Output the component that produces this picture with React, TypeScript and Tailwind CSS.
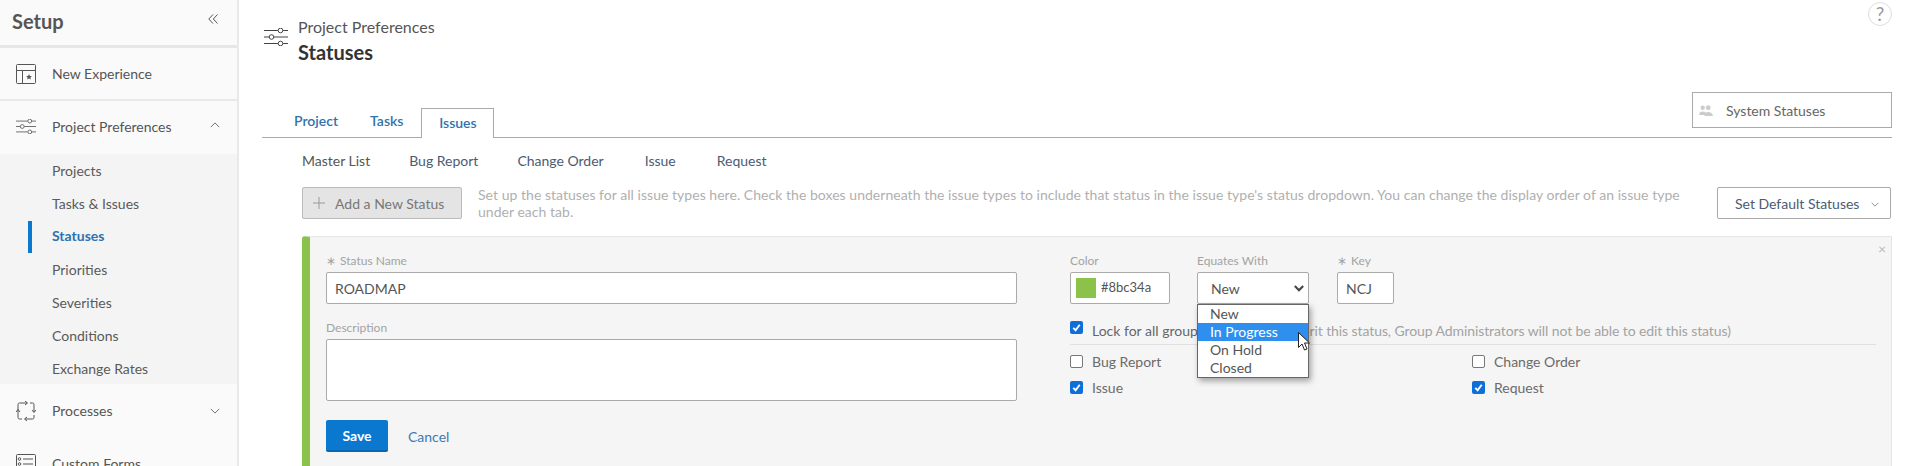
import type { ReactNode } from "react";

function SlidersIcon({ className }: { className: string }) {
  return (
    <svg viewBox="0 0 24 18" fill="none" stroke="currentColor" strokeWidth="1" className={className}>
      <path d="M0 2.5h14M19 2.5h5M0 9h5M10 9h14M0 15.5h14M19 15.5h5" />
      <circle cx="16.5" cy="2.5" r="2.3" />
      <circle cx="7.5" cy="9" r="2.3" />
      <circle cx="16.5" cy="15.5" r="2.3" />
    </svg>
  );
}

function Chevron({ up, className }: { up?: boolean; className: string }) {
  return (
    <svg viewBox="0 0 12 7" fill="none" stroke="currentColor" strokeWidth="1" className={className}>
      <path d={up ? "M1 6l5-5 5 5" : "M1 1l5 5 5-5"} />
    </svg>
  );
}

function NavRow({ icon, label, chevron, border, up }: { icon: ReactNode; label: string; chevron?: ReactNode; border?: boolean; up?: boolean }) {
  return (
    <div className={`h-[53px] flex items-center pl-4 pr-[16px] ${border ? "border-b-2 border-[#e8e8e8]" : ""} ${up ? "pb-[2px]" : ""}`}>
      <div className="w-[20px] h-[20px] flex items-center justify-center text-[#555]">{icon}</div>
      <span className="ml-[16px] text-[#555] flex-1">{label}</span>
      {chevron}
    </div>
  );
}

function SubItem({ label, active }: { label: string; active?: boolean }) {
  return (
    <div className={`relative h-[33px] flex items-center pl-[52px] ${active ? "pb-[3px]" : ""}`}>
      {active && <div className="absolute left-[28px] top-px w-1 h-[32px] bg-[#0b78cf]" />}
      <span className={active ? "font-bold text-[#2f72ad]" : "text-[#5a5a5a]"}>{label}</span>
    </div>
  );
}

function Check({ checked, label }: { checked?: boolean; label: string }) {
  return (
    <div className="flex items-center h-[25px]">
      <Box checked={checked} />
      <span className="ml-[9px] text-[#6b6b6b]">{label}</span>
    </div>
  );
}

function Box({ checked }: { checked?: boolean }) {
  return checked ? (
    <div className="w-[13px] h-[13px] rounded-[2px] bg-[#0f6fd8] flex items-center justify-center">
      <svg viewBox="0 0 12 12" className="w-[11px] h-[11px]" fill="none" stroke="#fff" strokeWidth="2">
        <path d="M2.5 6.5l2.5 2.5 4.5-6" />
      </svg>
    </div>
  ) : (
    <div className="w-[13px] h-[13px] rounded-[2px] border border-[#777] bg-white" />
  );
}

function Label({ children }: { children: ReactNode }) {
  return <div className="h-[18px] text-xs leading-[14px] text-[#a3a3a3]">{children}</div>;
}

export default function App() {
  return (
    <div className="h-[466px] w-[1907px] overflow-hidden flex bg-white text-[14px] font-['Lato','Noto_Sans',sans-serif]">
      <aside className="w-[239px] shrink-0 bg-[#fafafa] border-r-2 border-[#e9e9e9]">
        <div className="h-[48px] border-b-[3px] border-[#e6e6e6] flex items-center justify-between pl-3 pr-[19px] pb-[3px]">
          <span className="text-[20px] font-bold text-[#555]">Setup</span>
          <svg viewBox="0 0 10 10" fill="none" stroke="#555" strokeWidth="1" className="w-[10px] h-[10px] mb-[4px]">
            <path d="M5 0.500L0.800 5 5 9.500M9.500 0.500L5.300 5l4.200 4.500" />
          </svg>
        </div>
        <NavRow
          border
          label="New Experience"
          icon={
            <svg viewBox="0 0 20 20" fill="none" stroke="currentColor" strokeWidth="1" className="w-[20px] h-[20px]">
              <rect x="0.5" y="0.5" width="19" height="19" rx="1" />
              <path d="M0.5 6.5h19M6.5 6.5v13" />
              <path d="M13 10l.9 1.9 2 .2-1.5 1.4.4 2-1.8-1-1.8 1 .4-2-1.5-1.4 2-.2z" fill="currentColor" stroke="none" />
            </svg>
          }
        />
        <NavRow
          up
          label="Project Preferences"
          icon={<SlidersIcon className="w-[20px] h-[15px]" />}
          chevron={<Chevron up className="w-[10px] h-[6px] text-[#555] mb-[3px] mr-[1px]" />}
        />
        <div className="h-[230px] bg-[#f4f4f4]">
          <SubItem label="Projects" />
          <SubItem label="Tasks & Issues" />
          <SubItem label="Statuses" active />
          <SubItem label="Priorities" />
          <SubItem label="Severities" />
          <SubItem label="Conditions" />
          <SubItem label="Exchange Rates" />
        </div>
        <NavRow
          label="Processes"
          icon={
            <svg viewBox="0 0 20 20" fill="none" stroke="currentColor" strokeWidth="1" className="w-[20px] h-[20px]">
              <path d="M2 9V3.500a1.500 1.500 0 0 1 1.500-1.500H11M9 0l2.500 2L9 4" />
              <path d="M14 2h2.500A1.500 1.500 0 0 1 18 3.500V11M16 9l2 2.500L20 9" />
              <path d="M18 14v2.500a1.500 1.500 0 0 1-1.500 1.500H9M11 16l-2.500 2L11 20" />
              <path d="M6 18H3.500A1.500 1.500 0 0 1 2 16.500V9M0 11l2-2.500L4 11" />
            </svg>
          }
          chevron={<Chevron className="w-[10px] h-[6px] text-[#555] mr-[1px]" />}
        />
        <NavRow
          label="Custom Forms"
          icon={
            <svg viewBox="0 0 20 20" fill="none" stroke="currentColor" strokeWidth="1" className="w-[20px] h-[20px]">
              <rect x="0.5" y="0.5" width="19" height="19" rx="1" />
              <path d="M7 5h10M7 10h10M7 15h10" />
              <circle cx="3.500" cy="5" r="1.300" />
              <circle cx="3.500" cy="10" r="1.300" />
              <circle cx="3.500" cy="15" r="1.300" />
            </svg>
          }
        />
      </aside>

      <main className="flex-1 min-w-0 pl-[23px] pr-[15px] relative">
        <div className="h-[92px] flex text-[#555]">
          <SlidersIcon className="w-[24px] h-[18px] mt-[28px] ml-[2px] text-[#444]" />
          <div className="ml-[10px] pt-[17px]">
            <div className="text-[16px] leading-[20px] text-[#555]">Project Preferences</div>
            <div className="text-[20px] leading-[24px] mt-[3px] font-bold text-[#333]">Statuses</div>
          </div>
          <div className="absolute right-[15px] top-[2px] w-6 h-6 rounded-full border border-[#ddd] flex items-center justify-center text-[#999] text-[19px]">
            ?
          </div>
        </div>

        <div className="h-[46px] border-b border-[#aaa] flex items-end justify-between">
          <div className="flex items-end pl-[32px] text-[#2f72ad] font-semibold">
            <span className="pb-[6px]">Project</span>
            <span className="ml-[32px] pb-[6px]">Tasks</span>
            <span className="ml-[18px] w-[73px] h-[30px] -mb-px border border-b-0 border-[#aaa] bg-white flex items-center justify-center pb-[2px]">
              Issues
            </span>
          </div>
          <div className="w-[200px] h-[36px] mb-[9px] border border-[#aaa] flex items-center pl-[5px] text-[#666]">
            <svg viewBox="0 0 16 12" fill="#ccc" className="w-[15px] h-[11px]">
              <circle cx="5" cy="3" r="2.4" />
              <path d="M1 11c0-3 1.5-4 4-4s4 1 4 4z" />
              <circle cx="11" cy="3" r="2.6" />
              <path d="M7 12c0-3 1.5-4.500 4-4.500s5 1.500 5 4.500z" />
            </svg>
            <span className="ml-[13px]">System Statuses</span>
          </div>
        </div>

        <div className="h-[49px] flex items-center pl-[40px] pb-[5px] text-[#4b5b73]">
          <span className="text-[#555]">Master List</span>
          <span className="ml-[39px]">Bug Report</span>
          <span className="ml-[39px]">Change Order</span>
          <span className="ml-[41px]">Issue</span>
          <span className="ml-[41px]">Request</span>
        </div>

        <div className="flex pl-[40px] h-[33px]">
          <div className="w-[160px] h-[32px] rounded-[2px] border border-[#bbb] bg-[#e4e4e4] flex items-center pl-[10px] text-[#777]">
            <svg viewBox="0 0 12 12" className="w-[12px] h-[12px]" stroke="#999" strokeWidth="1">
              <path d="M6 0v12M0 6h12" />
            </svg>
            <span className="ml-[10px]">Add a New Status</span>
          </div>
          <p className="ml-[16px] w-[1215px] text-[#b0b0b0] leading-[17px] -mt-px tracking-[0.035px]">
            Set up the statuses for all issue types here. Check the boxes underneath the issue types to include that status in the issue type's status dropdown. You can change the display order of an issue type under each tab.
          </p>
          <div className="ml-auto mr-px w-[174px] h-[32px] shrink-0 rounded-[2px] border border-[#aaa] flex items-center pl-[17px] text-[#4b5b73]">
            <span>Set Default Statuses</span>
            <Chevron className="ml-[12px] w-[8px] h-[5px] mt-[2px]" />
          </div>
        </div>

        <div className="ml-[40px] mt-[16px] h-[240px] rounded-tl-[3px] border-t border-r border-[#e6e6e6] border-l-[8px] border-l-[#8bc34a] bg-[#f5f5f5] flex relative">
          <div className="absolute right-[5px] top-[5px] text-[#bbb] text-[14px] leading-none">×</div>
          <div className="w-[691px] ml-[16px] pt-[17px] shrink-0">
            <Label>
              <span className="mr-1">∗</span>Status Name
            </Label>
            <div className="h-[32px] rounded-[2px] border border-[#aaa] bg-white flex items-center pl-[8px] text-[#555]">ROADMAP</div>
            <div className="mt-[17px]">
              <Label>Description</Label>
            </div>
            <div className="h-[62px] rounded-[2px] border border-[#aaa] bg-white" />
            <div className="mt-[19px] flex items-center">
              <div className="w-[62px] h-[32px] rounded-[2px] bg-[#0b78cf] border-b-2 border-[#0a66b0] flex items-center justify-center font-bold text-white">
                Save
              </div>
              <span className="ml-[20px] text-[#3f78b5]">Cancel</span>
            </div>
          </div>

          <div className="ml-[53px] w-[806px] pt-[17px]">
            <div className="flex">
              <div className="w-[100px]">
                <Label>Color</Label>
                <div className="h-[32px] rounded-[2px] border border-[#aaa] bg-white flex items-center pl-[5px] text-[13px] text-[#555]">
                  <div className="w-[20px] h-[20px] bg-[#8bc34a]" />
                  <span className="ml-[5px]">#8bc34a</span>
                </div>
              </div>
              <div className="w-[112px] ml-[27px] relative">
                <Label>Equates With</Label>
                <div className="h-[32px] rounded-[2px] border border-[#aaa] bg-white flex items-center justify-between pl-[13px] pr-[4px] text-[#555]">
                  New
                  <svg viewBox="0 0 12 8" fill="none" stroke="#444" strokeWidth="2.5" className="w-[10px] h-[7px]">
                    <path d="M1 1l5 5 5-5" />
                  </svg>
                </div>
                <div className="absolute z-10 left-0 top-[50px] w-[112px] h-[74px] border border-[#666] bg-white shadow-[2px_3px_6px_rgba(0,0,0,0.35)] leading-[18px] text-[#555]">
                  <div className="h-[18px] pl-[12px]">New</div>
                  <div className="h-[18px] pl-[12px] bg-[#2f8fee] text-white">In Progress</div>
                  <div className="h-[18px] pl-[12px]">On Hold</div>
                  <div className="h-[18px] pl-[12px]">Closed</div>
                  <svg viewBox="0 0 12 19" className="absolute left-[100px] top-[27px] w-[12px] h-[19px]" fill="#fff" stroke="#222" strokeWidth="1">
                    <path d="M0.5 0.500v15l3.500-3.500 2.500 6 2.500-1-2.500-6h5z" />
                  </svg>
                </div>
              </div>
              <div className="w-[57px] ml-[28px]">
                <Label>
                  <span className="mr-1">∗</span>Key
                </Label>
                <div className="h-[32px] rounded-[2px] border border-[#aaa] bg-white flex items-center pl-[8px] text-[#555]">NCJ</div>
              </div>
            </div>

            <div className="mt-[16px] h-[25px] border-b border-[#e0e0e0] pb-[4px] flex items-start">
              <div className="mt-[1px]"><Box checked /></div>
              <span className="ml-[9px] text-[#666]">Lock for all groups</span>
              <span className="ml-1 text-[#a3a3a3] tracking-[-0.09px]">(Groups can inherit this status, Group Administrators will not be able to edit this status)</span>
            </div>

            <div className="grid grid-cols-[402px_1fr] mt-[4px] gap-y-px">
              <Check label="Bug Report" />
              <Check label="Change Order" />
              <Check checked label="Issue" />
              <Check checked label="Request" />
            </div>
          </div>
        </div>
      </main>
    </div>
  );
}
